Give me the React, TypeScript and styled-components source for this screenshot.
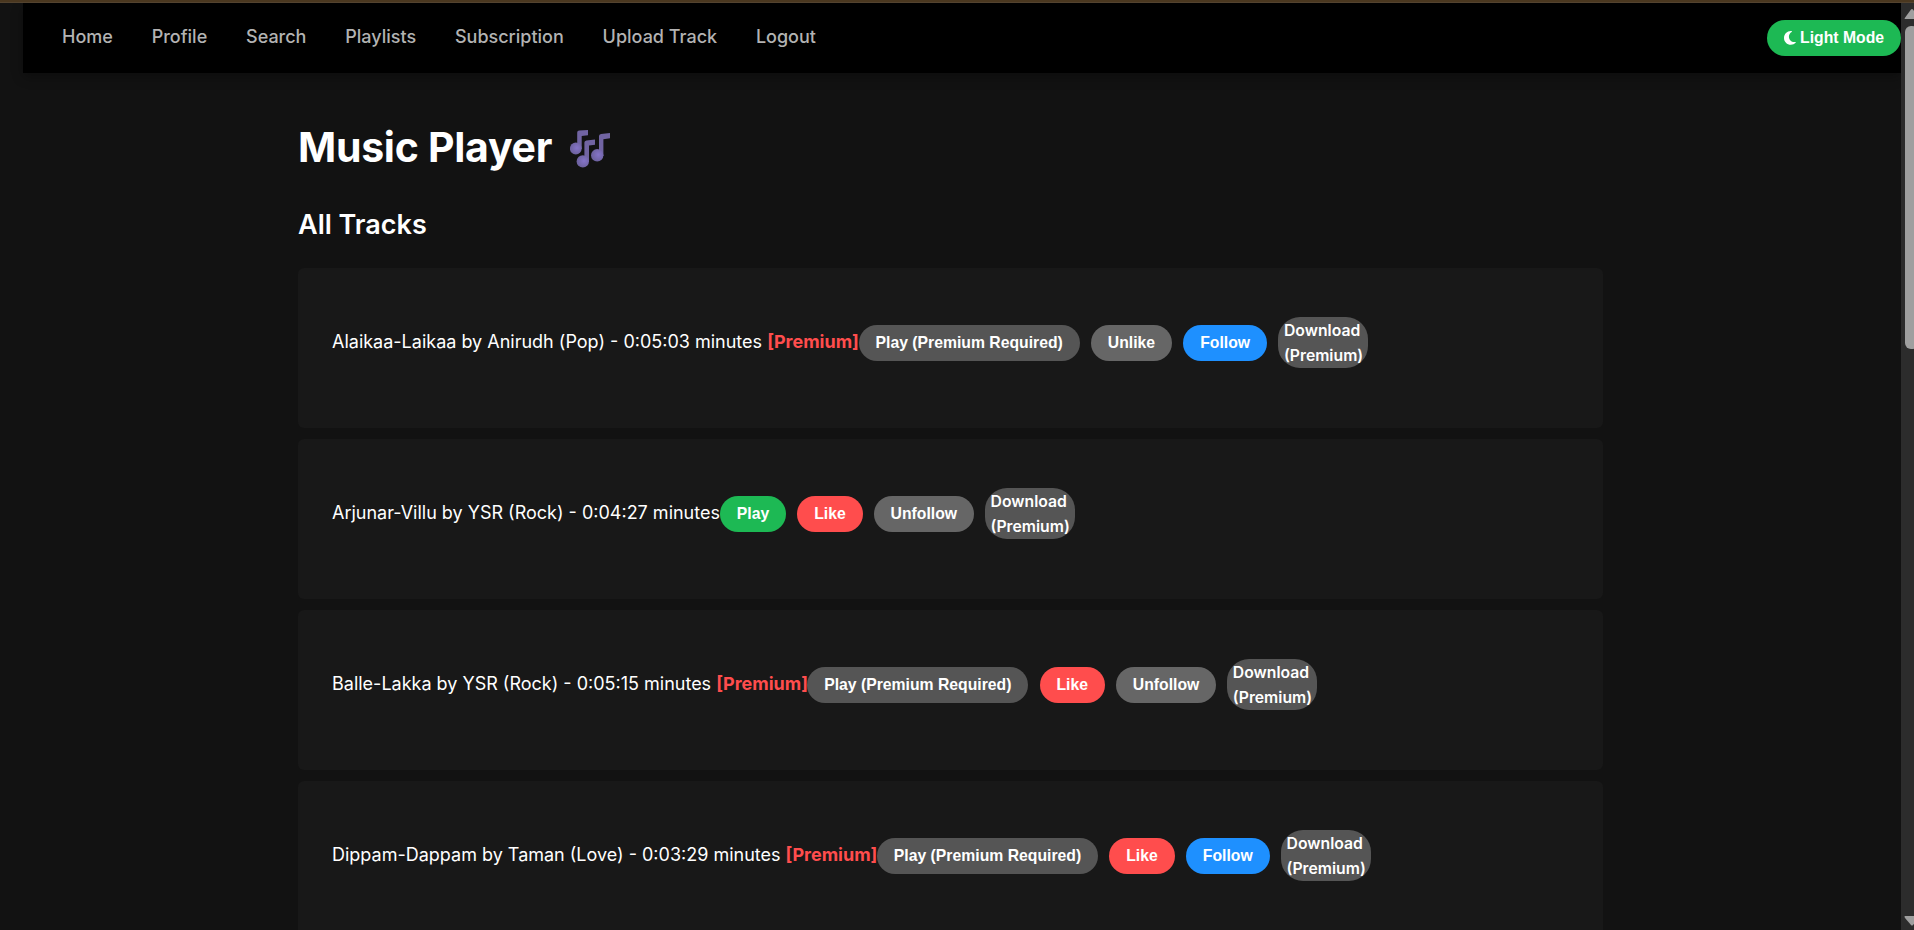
import React from "react";
import styled, { createGlobalStyle } from "styled-components";
import { FaMoon } from "react-icons/fa6";

const Global = createGlobalStyle`
  * { box-sizing: border-box; }
  html, body { margin: 0; padding: 0; background: #121212; overflow: hidden; }
`;

const Page = styled.div`
  height: 930px;
  display: flex;
  flex-direction: column;
  overflow: hidden;
  background: #121212;
  color: #fff;
  font-family: Inter, "Liberation Sans", sans-serif;
  font-size: 18px;
`;

const TopEdge = styled.div`
  flex: none;
  height: 3px;
  background: #4a371f;
  border-bottom: 1px solid #53432f;
`;

const Body = styled.div`
  flex: 1;
  min-height: 0;
  display: flex;
`;

const Content = styled.div`
  flex: 1;
  min-width: 0;
  overflow: hidden;
  padding-left: 23px;
`;

const Nav = styled.nav`
  height: 70px;
  display: flex;
  align-items: flex-start;
  justify-content: space-between;
  padding: 17px 0 0 39px;
  background: #000;
  box-shadow: 0 4px 11px rgba(0, 0, 0, 0.3);
`;

const Links = styled.div`
  display: flex;
  gap: 38.8px;
`;

const NavLink = styled.a`
  color: #b3b3b3;
  font-weight: 500;
  line-height: 34px;
  white-space: nowrap;
`;

const Pill = styled.button<{ $bg: string; $width: number }>`
  flex: none;
  width: ${(p) => p.$width}px;
  height: 36px;
  padding: 0;
  border: 0;
  border-radius: 22px;
  background: ${(p) => p.$bg};
  color: #fff;
  font: bold 15.75px "Liberation Sans", Arial, sans-serif;
  white-space: nowrap;
`;

const ModeButton = styled(Pill)`
  display: flex;
  align-items: center;
  justify-content: center;
  gap: 4.4px;

  svg {
    width: 11.8px;
    height: 15.75px;
  }
`;

const Main = styled.main`
  width: 1305px;
  margin-left: 275px;
`;

const Title = styled.h1`
  display: flex;
  align-items: center;
  gap: 18px;
  margin: 47px 0 0;
  height: 54px;
  font-size: 41px;
  letter-spacing: -0.28px;
  line-height: 54px;
  font-weight: 700;

  svg { margin-top: 4px; }
`;

const Subtitle = styled.h2`
  margin: 31px 0 0;
  height: 40px;
  font-size: 27px;
  line-height: 40px;
  font-weight: 600;
`;

const Tracks = styled.div`
  display: flex;
  flex-direction: column;
  gap: 11px;
  margin-top: 23px;
`;

const Track = styled.div`
  flex: none;
  height: 160px;
  display: flex;
  align-items: flex-start;
  padding: 49px 34px 0;
  border-radius: 6px;
  background: #181818;
`;

const Label = styled.span<{ $width: number }>`
  flex: none;
  width: ${(p) => p.$width}px;
  line-height: 50px;
  white-space: nowrap;
`;

const Premium = styled.span`
  color: #ff4d4d;
  font-weight: 700;
`;

const Actions = styled.div`
  display: flex;
  align-items: center;
  gap: 11.25px;
  height: 52px;
`;

const Download = styled.span`
  width: 90px;
  height: 51px;
  margin-bottom: 1px;
  padding: 1px 0 0 5.5px;
  border-radius: 22px;
  background: #555;
  font-size: 15.75px;
  font-weight: 600;
  line-height: 25px;
`;

const Scrollbar = styled.div`
  flex: none;
  width: 13px;
  display: flex;
  flex-direction: column;
  justify-content: space-between;
  padding-left: 3px;
  overflow: hidden;
  background: #2c2c2c;

  svg { display: block; flex: none; }
`;

const Thumb = styled.div`
  width: 13px;
  height: 323px;
  margin: 7px 0 auto 1px;
  border-radius: 6px;
  background: #9f9f9f;
`;

const Notes = () => (
  <svg width="41" height="38" viewBox="0 0 41 38">
    <defs>
      <radialGradient id="head" cx="0.6" cy="0.45" r="0.6">
        <stop offset="0" stopColor="#8574c8" />
        <stop offset="1" stopColor="#6b609c" />
      </radialGradient>
    </defs>
    <path d="M7.200 2.500 Q7.200 0.800 9.200 0.600 L18 0 V5.300 L11.700 6 V19 H7.200Z" fill="#7164a2" />
    <path d="M14.400 12.500 Q14.400 10.800 16.400 10.500 L25 9.600 V14.800 L19 15.600 V32 H14.400Z" fill="#7164a2" />
    <path d="M29 6 Q29 4.300 31 4 L40 3 V8.300 L33.400 9.200 V26 H29Z" fill="#7164a2" />
    <circle cx="5.800" cy="18.500" r="5.900" fill="url(#head)" />
    <circle cx="12.800" cy="31.400" r="6.200" fill="url(#head)" />
    <circle cx="27.200" cy="25.300" r="6.200" fill="url(#head)" />
  </svg>
);

const GREEN = "#1db954";
const RED = "#ff4d4d";
const BLUE = "#1e90ff";
const GREY = "#666";
const DISABLED = "#555";

interface Action { label: string; bg: string; width: number }
const locked: Action = { label: "Play (Premium Required)", bg: DISABLED, width: 221 };
const play: Action = { label: "Play", bg: GREEN, width: 66 };
const like: Action = { label: "Like", bg: RED, width: 65.3 };
const unlike: Action = { label: "Unlike", bg: GREY, width: 81 };
const follow: Action = { label: "Follow", bg: BLUE, width: 84 };
const unfollow: Action = { label: "Unfollow", bg: GREY, width: 100 };

const tracks = [
  { text: "Alaikaa-Laikaa by Anirudh (Pop) - 0:05:03 minutes", premium: true, width: 526.7, actions: [locked, unlike, follow] },
  { text: "Arjunar-Villu by YSR (Rock) - 0:04:27 minutes", premium: false, width: 388, actions: [play, like, unfollow] },
  { text: "Balle-Lakka by YSR (Rock) - 0:05:15 minutes", premium: true, width: 475.3, actions: [locked, like, unfollow] },
  { text: "Dippam-Dappam by Taman (Love) - 0:03:29 minutes", premium: true, width: 545, actions: [locked, like, follow] },
];

const links = ["Home", "Profile", "Search", "Playlists", "Subscription", "Upload Track", "Logout"];

export default function App() {
  return (
    <Page>
      <Global />
      <TopEdge />
      <Body>
        <Content>
          <Nav>
            <Links>{links.map((l) => <NavLink key={l}>{l}</NavLink>)}</Links>
            <ModeButton $bg={GREEN} $width={134}><FaMoon />Light Mode</ModeButton>
          </Nav>
          <Main>
            <Title>Music Player <Notes /></Title>
            <Subtitle>All Tracks</Subtitle>
            <Tracks>
              {tracks.map((t) => (
                <Track key={t.text}>
                  <Label $width={t.width}>
                    {t.text}{t.premium && <> <Premium>[Premium]</Premium></>}
                  </Label>
                  <Actions>
                    {t.actions.map((a) => (
                      <Pill key={a.label} $bg={a.bg} $width={a.width}>{a.label}</Pill>
                    ))}
                    <Download>Download<br />(Premium)</Download>
                  </Actions>
                </Track>
              ))}
            </Tracks>
          </Main>
        </Content>
        <Scrollbar>
          <svg width="13" height="16" viewBox="0 0 13 16">
            <path d="M1.500 14 L7 6.500 Q8 5.500 9 6.500 L14 14 Q14 16 13 16 H1 Q0 16 1.500 14Z" fill="#9f9f9f" />
          </svg>
          <Thumb />
          <svg width="13" height="16" viewBox="0 0 13 16">
            <path d="M1 2 H13 V6 L9 11 Q8 12 7 11 L1 4Q0 2 1 2Z" fill="#9f9f9f" />
          </svg>
        </Scrollbar>
      </Body>
    </Page>
  );
}
